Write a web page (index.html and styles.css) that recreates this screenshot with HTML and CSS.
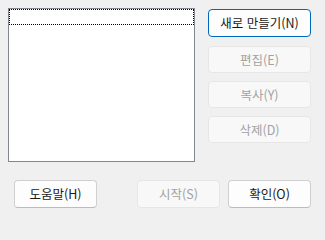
FILE: index.html
```html
<!DOCTYPE html>
<html lang="ko">
<head>
<meta charset="utf-8">
<link rel="stylesheet" href="styles.css">
</head>
<body>
<div class="dialog">
  <div class="top">
    <div class="listbox">
      <div class="focus-row"></div>
    </div>
    <div class="side">
      <button class="btn primary">새로 만들기(N)</button>
      <button class="btn" disabled>편집(E)</button>
      <button class="btn" disabled>복사(Y)</button>
      <button class="btn" disabled>삭제(D)</button>
    </div>
  </div>
  <div class="bottom">
    <button class="btn wide">도움말(H)</button>
    <div class="right">
      <button class="btn wide" disabled>시작(S)</button>
      <button class="btn wide">확인(O)</button>
    </div>
  </div>
</div>
</body>
</html>
```
FILE: styles.css
```css
html, body {
  margin: 0;
  padding: 0;
  background: #f0f0f0;
  width: 325px;
  height: 222px;
  overflow: hidden;
  font-family: "Noto Sans CJK KR", "Noto Sans", sans-serif;
  font-size: 12.5px;
}
.dialog {
  display: flex;
  flex-direction: column;
  padding: 8px 14px 0 8px;
  box-sizing: border-box;
  width: 325px;
}
.top {
  display: flex;
  gap: 13px;
}
.listbox {
  width: 192px;
  height: 154px;
  box-sizing: border-box;
  background: #fff;
  border: 1px solid #828790;
}
.focus-row {
  height: 16px;
  box-sizing: border-box;
  border: 1px dotted #000;
}
.side {
  display: flex;
  flex-direction: column;
  gap: 8px;
  padding-top: 1px;
}
.btn {
  width: 103px;
  height: 28px;
  box-sizing: border-box;
  border: 1px solid #d0d0d0;
  border-bottom-color: #bcbcbc;
  border-radius: 4px;
  background: #fdfdfd;
  color: #1a1a1a;
  font-family: inherit;
  font-size: 12.5px;
  line-height: 16px;
  padding: 0;
  margin: 0;
}
.btn.primary {
  border: 1px solid #0067c0;
}
.btn:disabled {
  background: #f8f8f8;
  border-color: #e6e6e6;
  color: #a2a2a2;
}
.side .btn:disabled {
  height: 27px;
  margin-top: 1px;
}
.side .btn:disabled + .btn:disabled {
  margin-top: 0;
}
.bottom {
  display: flex;
  justify-content: space-between;
  margin-top: 18px;
  padding-left: 6px;
}
.right {
  display: flex;
  gap: 8px;
}
.btn.wide {
  width: 83px;
}
```
